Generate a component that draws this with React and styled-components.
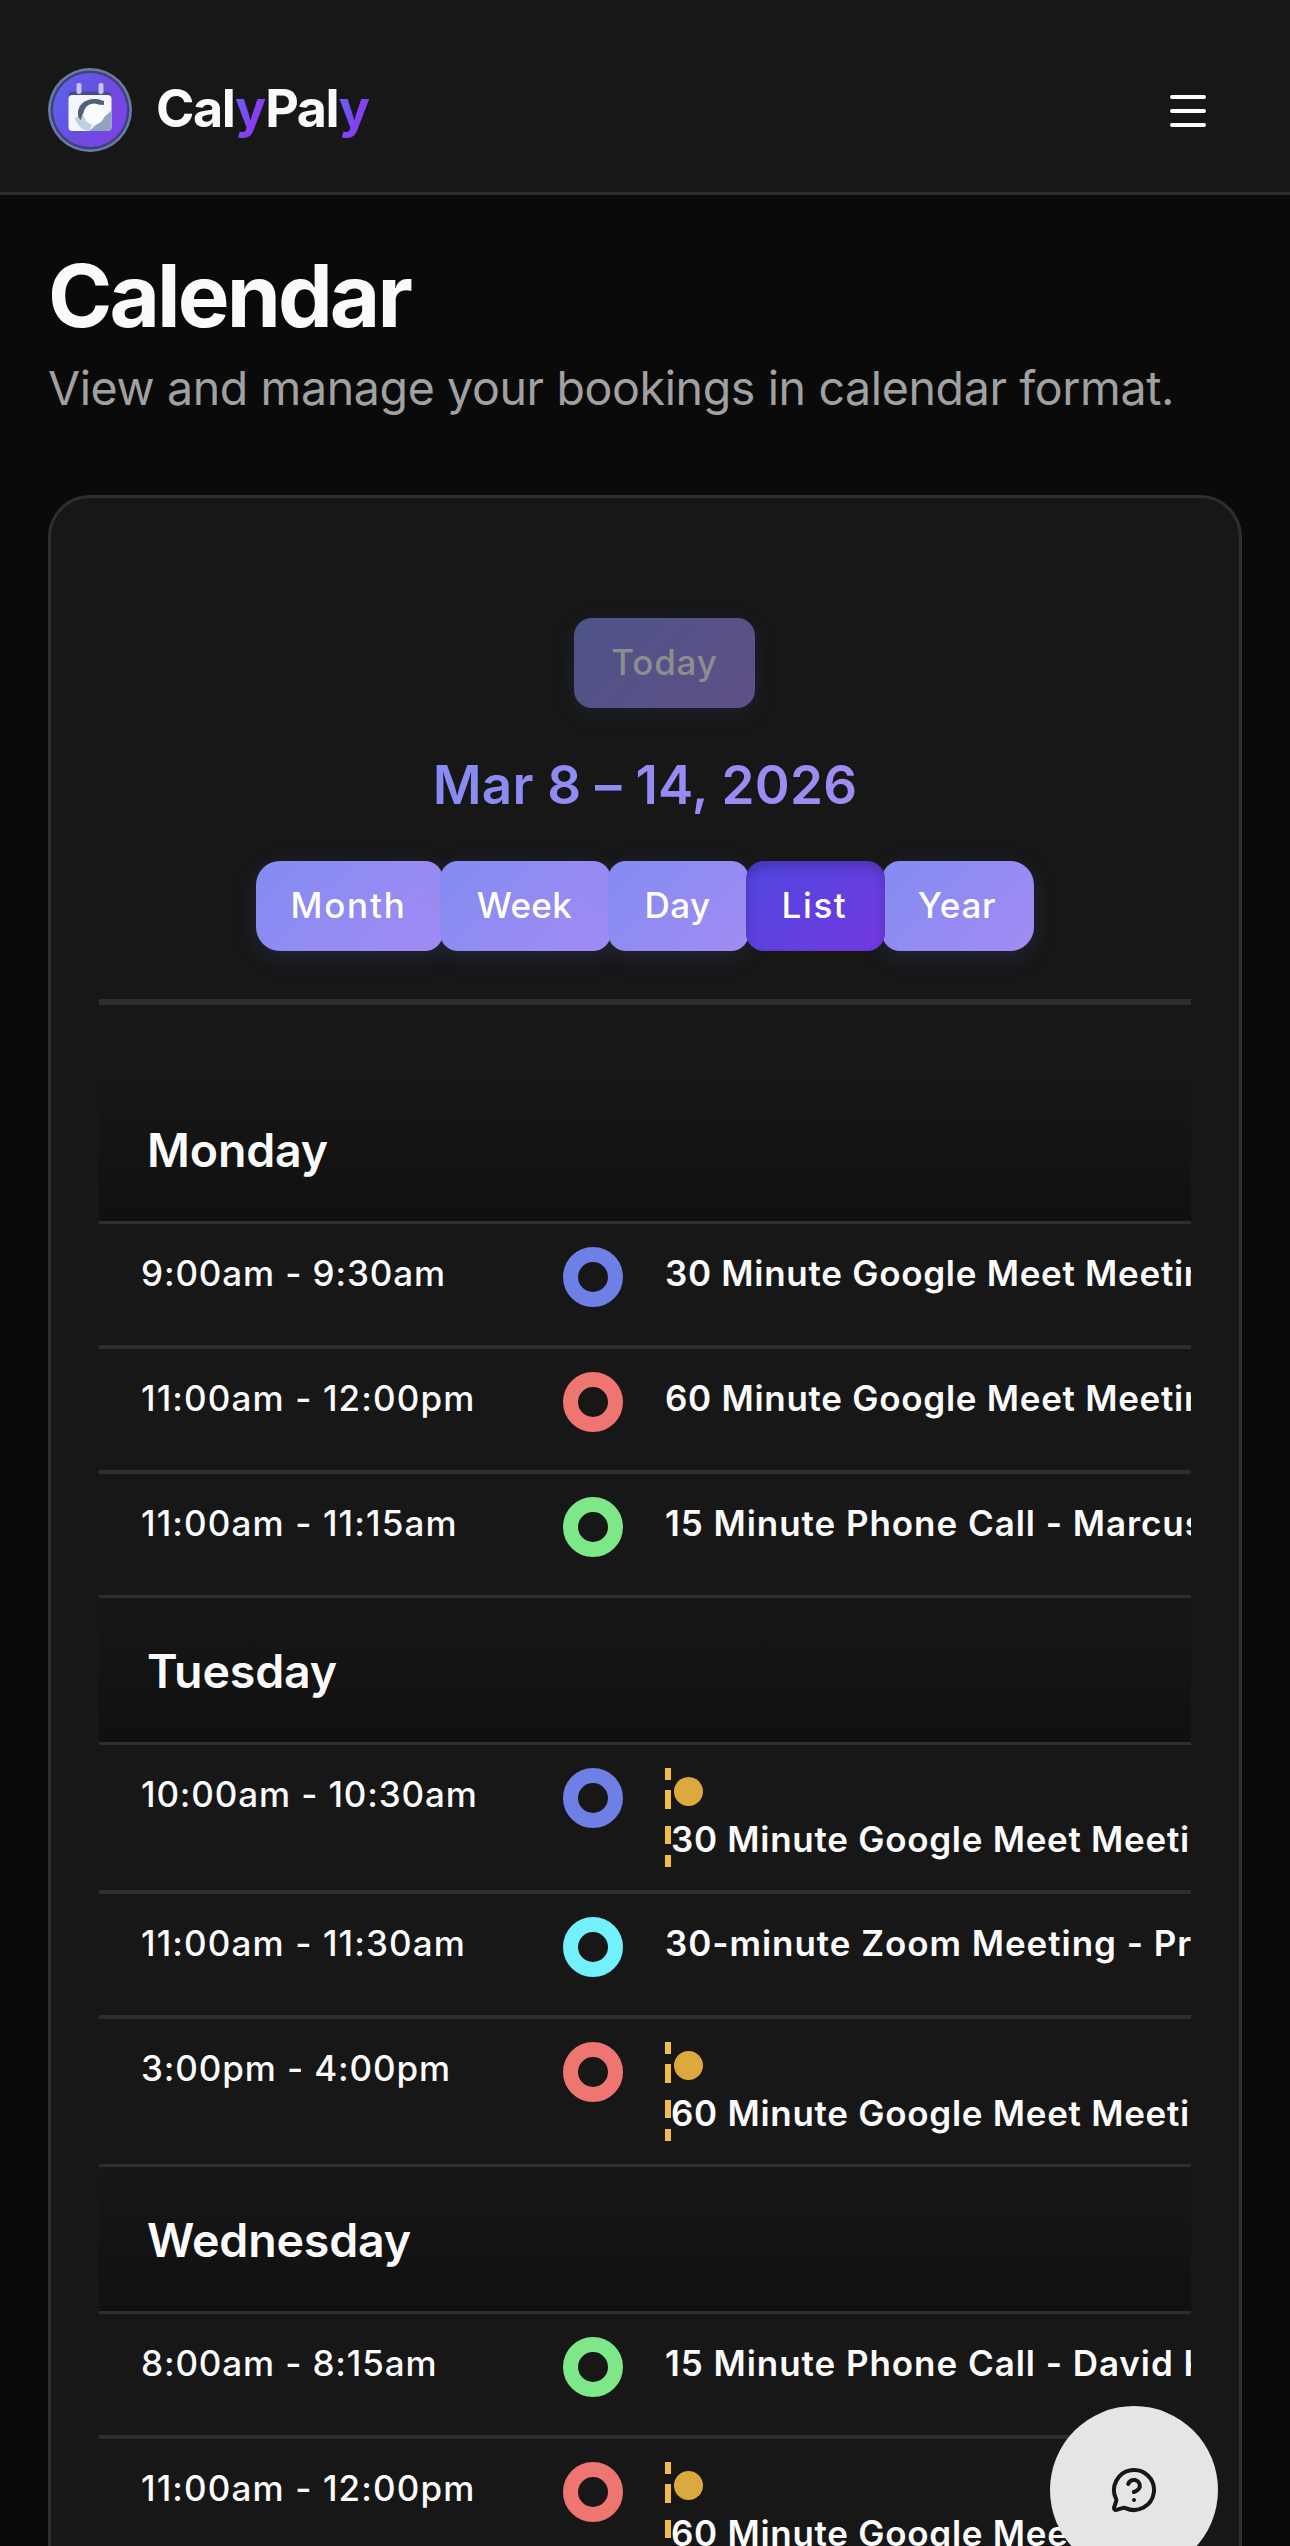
import React, { useState } from 'react';
import styled, { createGlobalStyle, css } from 'styled-components';
import { Menu, MessageCircleQuestion } from 'lucide-react';

const GlobalStyle = createGlobalStyle`
  * {
    box-sizing: border-box;
  }

  body {
    margin: 0;
    background-color: #0a0a0a;
    color: #fafafa;
    font-family: Inter, 'Liberation Sans', sans-serif;
    -webkit-font-smoothing: antialiased;
  }

  h1, h2, h3, p {
    margin: 0;
  }

  button {
    border: 0;
    padding: 0;
    background: none;
    color: inherit;
    font-family: inherit;
    cursor: pointer;
  }
`;

const Page = styled.div`
  height: 100vh;
  overflow: hidden;
`;

const Header = styled.header`
  height: 195px;
  padding: 28px 78px 0 48px;
  display: flex;
  align-items: center;
  justify-content: space-between;
  background-color: #171717;
  border-bottom: 3px solid #2e2e2e;
`;

const Brand = styled.div`
  display: flex;
  align-items: center;
  gap: 24px;
`;

const BrandName = styled.span`
  padding-bottom: 2px;
  font-size: 52px;
  font-weight: 700;
  line-height: 64px;
  letter-spacing: -1.4px;
`;

const Accent = styled.span`
  background: linear-gradient(110deg, #6366f1 10%, #7c4af5 50%, #9333ea 85%);
  background-clip: text;
  -webkit-background-clip: text;
  color: transparent;
`;

const MenuButton = styled.button`
  display: flex;
  padding-top: 2px;
  color: #ffffff;
`;

const Main = styled.main`
  padding: 56px 48px 0;
`;

const PageTitle = styled.h1`
  font-size: 87px;
  font-weight: 700;
  line-height: 90px;
  letter-spacing: -2.9px;
`;

const Subtitle = styled.p`
  margin-top: 11px;
  color: #a1a1a1;
  font-size: 46.5px;
  line-height: 72px;
  letter-spacing: -0.37px;
  white-space: nowrap;
`;

const Card = styled.section`
  height: 2400px;
  margin-top: 71px;
  padding: 120px 48px 0;
  background-color: #171717;
  border: 3px solid #2e2e2e;
  border-radius: 42px;
`;

const Toolbar = styled.div`
  display: flex;
  flex-direction: column;
  align-items: center;
  padding-bottom: 48px;
  border-bottom: 6px solid #2e2e2e;
`;

const ToolbarButton = styled.button`
  width: ${({ $width }) => $width}px;
  height: 90px;
  padding-bottom: 2px;
  border-radius: 18px;
  background: linear-gradient(135deg, #838cf2 0%, #a28bf2 100%);
  box-shadow: 0 6px 24px rgba(99, 132, 241, 0.14);
  color: #ffffff;
  font-size: 35px;
  font-weight: 500;
  letter-spacing: ${({ $tracking }) => $tracking}px;
`;

const TodayButton = styled(ToolbarButton)`
  margin-left: 39px;
  background: linear-gradient(135deg, #4e5388 0%, #5e5086 100%);
  box-shadow: 0 6px 24px rgba(99, 132, 241, 0.1);
  color: #8d8d8f;
  cursor: not-allowed;
`;

const RangeTitle = styled.h2`
  height: 153px;
  background: linear-gradient(135deg, #818cf2 0%, #a78bf2 100%);
  background-clip: text;
  -webkit-background-clip: text;
  color: transparent;
  font-size: 53px;
  font-weight: 600;
  line-height: 155px;
  letter-spacing: 0.24px;
`;

const ViewSwitch = styled.div`
  display: flex;
`;

const ViewButton = styled(ToolbarButton)`
  padding: 0 2px 3px 0;

  & + & {
    margin-left: -3px;
  }

  &:first-child {
    border-top-left-radius: 24px;
    border-bottom-left-radius: 24px;
  }

  &:last-child {
    border-top-right-radius: 24px;
    border-bottom-right-radius: 24px;
  }

  ${({ $active }) =>
    $active &&
    css`
      position: relative;
      z-index: 1;
      background: linear-gradient(135deg, #4f46e0 0%, #7339e0 100%);
      box-shadow: inset 0 6px 12px rgba(0, 0, 0, 0.2);
    `}
`;

const List = styled.div`
  margin-top: 72px;
  overflow: hidden;
`;

const DayHeader = styled.h3`
  height: 147px;
  padding: 1px 0 0 48px;
  background: linear-gradient(180deg, #171717 0%, #101010 100%);
  border-bottom: 3px solid #2e2e2e;
  font-size: 46.5px;
  font-weight: 600;
  line-height: 144px;
  letter-spacing: -0.15px;
`;

const EventRow = styled.div`
  height: ${({ $tentative }) => ($tentative ? 149 : 125)}px;
  display: grid;
  grid-template-columns: 422px 102px auto;
  padding: 23px 0 0 42px;
  border-bottom: 4px solid #2e2e2e;
  white-space: nowrap;

  &:last-child {
    height: ${({ $tentative }) => ($tentative ? 148 : 124)}px;
    border-bottom-width: 3px;
  }
`;

const EventTime = styled.span`
  font-size: 35px;
  font-weight: 500;
  line-height: 53px;
  letter-spacing: ${({ $tracking }) => $tracking}px;
`;

const EventRing = styled.span`
  width: 60px;
  height: 60px;
  border: 15px solid ${({ $color }) => $color};
  border-radius: 50%;
`;

const EventTitle = styled.span`
  font-size: 35px;
  font-weight: 600;
  line-height: 53px;
  letter-spacing: ${({ $wide }) => ($wide ? 0.95 : 0.72)}px;
`;

const TentativeTitle = styled(EventTitle)`
  display: flex;
  flex-direction: column;
  gap: 17px;
`;

/* dashed rail that runs down the left of an unconfirmed booking */
const Rail = styled.span`
  height: 41px;
  display: flex;
  border-left: 6px solid;
  border-image: linear-gradient(
      180deg,
      #f3bb48 ${({ $dashes }) => $dashes[0]}px,
      transparent ${({ $dashes }) => $dashes[0]}px ${({ $dashes }) => $dashes[1]}px,
      #f3bb48 ${({ $dashes }) => $dashes[1]}px
    )
    0 0 0 6;
  line-height: 27px;
`;

const TentativeDot = styled.span`
  width: 29px;
  height: 29px;
  margin: 9px 0 0 3px;
  border-radius: 50%;
  background-color: #dca93e;
`;

const HelpButton = styled.button`
  position: fixed;
  right: 72px;
  bottom: -28px;
  z-index: 10;
  width: 168px;
  height: 168px;
  display: flex;
  align-items: center;
  justify-content: center;
  border-radius: 50%;
  background-color: #e5e5e5;
  color: #171717;
`;

const views = [
  { name: 'Month', width: 187, tracking: 1.8 },
  { name: 'Week', width: 171, tracking: 0.4 },
  { name: 'Day', width: 141, tracking: 0.5 },
  { name: 'List', width: 139, tracking: 1.6 },
  { name: 'Year', width: 152, tracking: 0.7 },
];

const colors = {
  blue: '#6e7fe6',
  red: '#ef7670',
  green: '#7ee787',
  cyan: '#72f1fd',
};

const days = [
  {
    name: 'Monday',
    events: [
      { time: '9:00am - 9:30am', color: colors.blue, title: '30 Minute Google Meet Meeting' },
      { time: '11:00am - 12:00pm', color: colors.red, title: '60 Minute Google Meet Meeting' },
      { time: '11:00am - 11:15am', color: colors.green, title: '15 Minute Phone Call - Marcus', wide: true },
    ],
  },
  {
    name: 'Tuesday',
    events: [
      { time: '10:00am - 10:30am', color: colors.blue, title: '30 Minute Google Meet Meeting', tentative: true },
      { time: '11:00am - 11:30am', color: colors.cyan, title: '30-minute Zoom Meeting - Priya', wide: true },
      { time: '3:00pm - 4:00pm', color: colors.red, title: '60 Minute Google Meet Meeting', tentative: true },
    ],
  },
  {
    name: 'Wednesday',
    events: [
      { time: '8:00am - 8:15am', color: colors.green, title: '15 Minute Phone Call - David Kim', wide: true },
      { time: '11:00am - 12:00pm', color: colors.red, title: '60 Minute Google Meet Meeting', tentative: true },
    ],
  },
];

const Logo = () => (
  <svg width="84" height="84" viewBox="0 0 84 84" aria-hidden="true">
    <defs>
      <linearGradient id="disc" x1="0" y1="0.2" x2="1" y2="0.8">
        <stop offset="0" stopColor="#5b63ee" />
        <stop offset="0.5" stopColor="#6a4ddd" />
        <stop offset="1" stopColor="#8140ea" />
      </linearGradient>
      <clipPath id="sheet">
        <rect x="20.5" y="27" width="43" height="36" rx="4" />
      </clipPath>
    </defs>
    <circle cx="42" cy="42" r="42" fill="#697ca3" />
    <circle cx="42" cy="42" r="39.5" fill="#40407f" />
    <circle cx="42" cy="42" r="37" fill="url(#disc)" />
    <rect x="21" y="23.5" width="42" height="8" rx="3" fill="#484a8c" />
    <rect x="28.5" y="15" width="5" height="11" rx="2" fill="#c3c6f3" />
    <rect x="50.5" y="15" width="5" height="11" rx="2" fill="#c3c6f3" />
    <g clipPath="url(#sheet)">
      <rect x="20" y="27" width="44" height="37" fill="#f3f7fc" />
      <path d="M40 64 64 42v22z" fill="#92a5c0" />
      <path d="M27 50c2 8 7 12 14 13l4-8-12-9z" fill="#c3cfdd" />
      <path d="M56 33c-14-6-27 2-26 13 0 3 1 5 3 6 1-9 9-17 23-15z" fill="#4d6279" />
      <circle cx="46" cy="46" r="10.5" fill="#fafcff" />
    </g>
  </svg>
);

const Event = ({ time, color, title, tentative, wide }) => (
  <EventRow $tentative={tentative}>
    <EventTime $tracking={time.startsWith('11') ? 1.13 : 0.87}>{time}</EventTime>
    <EventRing $color={color} />
    {tentative ? (
      <TentativeTitle>
        <Rail $dashes={[12, 22]}>
          <TentativeDot />
        </Rail>
        <Rail $dashes={[18, 29]}>{title}</Rail>
      </TentativeTitle>
    ) : (
      <EventTitle $wide={wide}>{title}</EventTitle>
    )}
  </EventRow>
);

const App = () => {
  const [view, setView] = useState('List');

  return (
    <Page>
      <GlobalStyle />
      <Header>
        <Brand>
          <Logo />
          <BrandName>
            Cal<Accent>y</Accent>Pal<Accent>y</Accent>
          </BrandName>
        </Brand>
        <MenuButton aria-label="Open menu">
          <Menu size={48} />
        </MenuButton>
      </Header>

      <Main>
        <PageTitle>Calendar</PageTitle>
        <Subtitle>View and manage your bookings in calendar format.</Subtitle>

        <Card>
          <Toolbar>
            <TodayButton $width={181} $tracking={0.8} disabled>Today</TodayButton>
            <RangeTitle>Mar 8 – 14, 2026</RangeTitle>
            <ViewSwitch>
              {views.map(({ name, width, tracking }) => (
                <ViewButton
                  key={name}
                  $width={width}
                  $tracking={tracking}
                  $active={view === name}
                  onClick={() => setView(name)}
                >
                  {name}
                </ViewButton>
              ))}
            </ViewSwitch>
          </Toolbar>

          <List>
            {days.map((day) => (
              <div key={day.name}>
                <DayHeader>{day.name}</DayHeader>
                {day.events.map((event) => (
                  <Event key={event.time} {...event} />
                ))}
              </div>
            ))}
          </List>
        </Card>
      </Main>

      <HelpButton aria-label="Help">
        <MessageCircleQuestion size={48} />
      </HelpButton>
    </Page>
  );
};

export default App;
